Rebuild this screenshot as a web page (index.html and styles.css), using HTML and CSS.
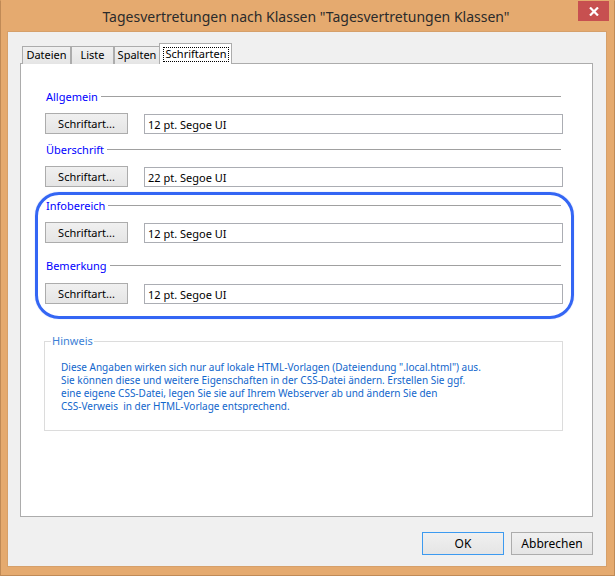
FILE: index.html
```html
<!DOCTYPE html>
<html lang="de">
<head>
<meta charset="utf-8">
<title>Tagesvertretungen nach Klassen</title>
<link rel="stylesheet" href="styles.css">
</head>
<body>
<div class="window">
  <div class="titlebar">
    <span class="title">Tagesvertretungen nach Klassen "Tagesvertretungen Klassen"</span>
    <div class="close">
      <svg width="10" height="9" viewBox="0 0 10 9"><path d="M1 0.5 L9 8.5 M9 0.5 L1 8.5" stroke="#fff" stroke-width="2.2" fill="none"/></svg>
    </div>
  </div>
  <div class="client">
    <div class="tabs">
      <div class="tab tab-dateien">Dateien</div>
      <div class="tab tab-liste">Liste</div>
      <div class="tab tab-spalten">Spalten</div>
      <div class="tab tab-active"><span class="focus">Schriftarten</span></div>
    </div>
    <div class="panel">
      <div class="head head-1"><span class="head-text">Allgemein</span><span class="head-line"></span></div>
      <div class="row row-a"><div class="btn font-btn">Schriftart...</div><div class="field">12 pt. Segoe UI</div></div>
      <div class="head head-2"><span class="head-text">Überschrift</span><span class="head-line"></span></div>
      <div class="row row-a"><div class="btn font-btn">Schriftart...</div><div class="field">22 pt. Segoe UI</div></div>
      <div class="head head-3"><span class="head-text">Infobereich</span><span class="head-line"></span></div>
      <div class="row row-a"><div class="btn font-btn">Schriftart...</div><div class="field">12 pt. Segoe UI</div></div>
      <div class="head head-4"><span class="head-text">Bemerkung</span><span class="head-line"></span></div>
      <div class="row row-b"><div class="btn font-btn">Schriftart...</div><div class="field">12 pt. Segoe UI</div></div>
      <div class="highlight"></div>
      <div class="hint">
        <span class="hint-label">Hinweis</span>
        <p class="hint-text">Diese Angaben wirken sich nur auf lokale HTML-Vorlagen (Dateiendung ".local.html") aus.<br>Sie können diese und weitere Eigenschaften in der CSS-Datei ändern. Erstellen Sie ggf.<br>eine eigene CSS-Datei, legen Sie sie auf Ihrem Webserver ab und ändern Sie den<br>CSS-Verweis&nbsp; in der HTML-Vorlage entsprechend.</p>
      </div>
    </div>
    <div class="actions">
      <div class="btn action-btn ok">OK</div>
      <div class="btn action-btn">Abbrechen</div>
    </div>
  </div>
</div>
</body>
</html>
```
FILE: styles.css
```css
* { box-sizing: border-box; }
html, body { margin: 0; padding: 0; }
body {
  width: 615px;
  height: 576px;
  font-family: "Segoe UI", "Noto Sans", "Open Sans", sans-serif;
  font-size: 11px;
  color: #000;
}
.window {
  width: 615px;
  height: 576px;
  background: #e5aa6f;
  border: 1px solid #c08a56;
  border-top-color: #e5aa6f;
  padding: 0 7px 8px 6px;
  display: flex;
  flex-direction: column;
}
.titlebar {
  height: 30px;
  position: relative;
  display: flex;
  align-items: center;
  justify-content: center;
}
.title {
  font-size: 14px;
  color: #2b2b2b;
  margin-left: -2px;
}
.close {
  position: absolute;
  right: -2px;
  top: 0;
  width: 31px;
  height: 20px;
  background: #c75050;
  display: flex;
  align-items: center;
  justify-content: center;
}
.client {
  width: 600px;
  height: 536px;
  background: #f0f0f0;
  border: 1px solid #d6a06a;
  padding: 11px 13px 0 12px;
}
.tabs {
  display: flex;
  align-items: flex-end;
  height: 21px;
  margin-bottom: -1px;
  padding-left: 2px;
  position: relative;
  z-index: 1;
}
.tab {
  height: 18px;
  border: 1px solid #acacac;
  border-bottom: none;
  background: linear-gradient(#f0f0f0, #e5e5e5);
  display: flex;
  justify-content: center;
  align-items: center;
  line-height: 14px;
  padding-bottom: 1px;
  color: #000;
}
.tab-dateien { width: 49px; }
.tab-liste { width: 43px; }
.tab-spalten { width: 46px; }
.tab-active {
  width: 73px;
  height: 21px;
  margin-left: -1px;
  background: #fff;
  align-items: flex-start;
  padding-top: 3px;
  padding-bottom: 0;
}
.focus {
  display: block;
  width: 66px;
  height: 15px;
  border: 1px dotted #000;
  text-align: center;
  line-height: 12px;
  margin-left: 1px;
}
.panel {
  width: 573px;
  height: 454px;
  background: #fff;
  border: 1px solid #acacac;
  padding: 25px 29px 0 24px;
  position: relative;
}
.head {
  display: flex;
  align-items: center;
  height: 14px;
  margin-left: 1px;
  margin-right: 2px;
  gap: 3px;
  color: #0000ff;
}
.head-line {
  flex: 1;
  height: 1px;
  background: #a0a0a0;
}
.head-2 { margin-top: 8px; }
.head-3 { margin-top: 11px; }
.head-4 { margin-top: 15px; }
.row {
  display: flex;
  align-items: flex-start;
  gap: 16px;
  height: 21px;
}
.row-a { margin-top: 10px; }
.row-b { margin-top: 11px; }
.btn {
  border: 1px solid #acacac;
  background: linear-gradient(#f0f0f0, #e5e5e5);
  display: flex;
  align-items: center;
  justify-content: center;
  color: #000;
}
.font-btn {
  width: 83px;
  height: 21px;
}
.field {
  flex: 1;
  height: 20px;
  margin-top: 1px;
  border: 1px solid #abadb3;
  padding-left: 3px;
  display: flex;
  align-items: center;
  background: #fff;
}
.highlight {
  position: absolute;
  left: 14px;
  top: 128px;
  width: 539px;
  height: 127px;
  border: 3px solid #3466f4;
  border-radius: 24px;
  box-shadow: 0 0 1px rgba(52, 102, 244, 0.5);
  pointer-events: none;
}
.hint {
  position: relative;
  margin-top: 37px;
  margin-left: -1px;
  height: 90px;
  border: 1px solid #dcdcdc;
  padding: 19px 0 0 16px;
}
.hint-label {
  position: absolute;
  left: 6px;
  top: -8px;
  background: #fff;
  padding: 0 1px;
  line-height: 14px;
  color: #3c7fd6;
  font-size: 11px;
}
.hint-text {
  margin: 0;
  font-size: 10px;
  line-height: 13px;
  color: #1166cc;
  white-space: nowrap;
}
.actions {
  display: flex;
  justify-content: flex-end;
  gap: 7px;
  margin-top: 15px;
}
.action-btn {
  width: 82px;
  height: 23px;
  font-size: 12px;
}
.ok {
  border-color: #3c9af0;
}
```
